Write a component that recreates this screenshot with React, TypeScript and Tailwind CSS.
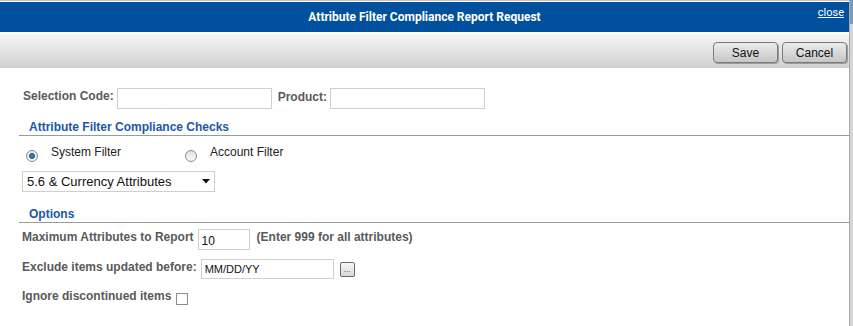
const Label = ({ children, className = '' }: { children: React.ReactNode; className?: string }) => (
  <span className={`text-[12px] leading-[14px] font-bold text-[#5a5a5a] ${className}`}>{children}</span>
);

const SectionHeader = ({ title, className = '' }: { title: string; className?: string }) => (
  <div className={`ml-[19px] border-b border-[#9a9a9a] pb-[1px] pl-[10px] text-[12px] leading-[14px] ${className}`}>
    <span className="font-bold text-[#1c58a6]">{title}</span>
  </div>
);

const Radio = ({ checked }: { checked?: boolean }) => (
  <span className="flex h-[12px] w-[12px] items-center justify-center rounded-full border border-[#8a8a8a] bg-gradient-to-b from-[#e2e2e2] to-[#fbfbfb]">
    {checked && <span className="h-[6px] w-[6px] rounded-full border border-[#1b4d7c] bg-[#2f7fc4]" />}
  </span>
);

const ToolButton = ({ label }: { label: string }) => (
  <button className="flex h-[21px] w-[65px] items-center justify-center rounded-[4px] border border-[#7a7a7a] bg-gradient-to-b from-[#ececec] to-[#c6c6c6] text-[12px] text-[#111] shadow-[1px_1px_0_#9c9c9c]">
    {label}
  </button>
);

export default function App() {
  return (
    <div className="flex h-[326px] w-[853px] overflow-hidden bg-white leading-[14px]" style={{ fontFamily: '"Liberation Sans", Arial, sans-serif' }}>
      <div className="flex w-[849px] flex-col">
        {/* Title bar */}
        <div className="h-[1px] bg-[#c4c4c4]" />
        <div className="h-[1px] bg-white" />
        <div className="relative flex h-[30px] items-center justify-center bg-[#00509e]">
          <span className="text-[12px] font-bold text-white" style={{ fontFamily: 'Roboto, "Liberation Sans", sans-serif' }}>
            Attribute Filter Compliance Report Request
          </span>
          <a className="absolute right-[5px] top-[4px] text-[11px] text-white underline" style={{ fontFamily: 'Roboto, "Liberation Sans", sans-serif' }}>
            close
          </a>
        </div>
        <div className="h-[2px] bg-white" />

        {/* Toolbar */}
        <div className="flex h-[34px] justify-end gap-[4px] bg-gradient-to-b from-[#f6f6f6] to-[#d0d0d0] pr-[2px] pt-[8px]">
          <ToolButton label="Save" />
          <ToolButton label="Cancel" />
        </div>

        {/* Selection row */}
        <div className="mt-[20px] flex items-start pl-[23px]">
          <Label className="mt-[1px]">Selection Code:</Label>
          <input className="ml-[3px] h-[21px] w-[155px] border border-[#cfcfcf] outline-none" />
          <Label className="ml-[6px] mt-[2px]">Product:</Label>
          <input className="ml-[3px] h-[21px] w-[155px] border border-[#cfcfcf] outline-none" />
        </div>

        <SectionHeader title="Attribute Filter Compliance Checks" className="mt-[11px]" />

        <div className="mt-[14px] flex items-start pl-[26px]">
          <Radio checked />
          <span className="ml-[13px] -mt-[5px] text-[12px] text-[#222]">System Filter</span>
          <span className="ml-[64px]">
            <Radio />
          </span>
          <span className="ml-[13px] -mt-[5px] text-[12px] text-[#222]">Account Filter</span>
        </div>

        <div className="ml-[22px] mt-[9px] flex h-[21px] w-[193px] items-center justify-between border border-[#cfcfcf] pl-[4px] pr-[4px]">
          <span className="text-[13px] text-[#111]">5.6 &amp; Currency Attributes</span>
          <svg width="8" height="5" viewBox="0 0 8 5">
            <path d="M0 0h8L4 4.5z" fill="#111" />
          </svg>
        </div>

        <SectionHeader title="Options" className="mt-[15px]" />

        <div className="mt-[6px] flex items-start pl-[22px]">
          <Label className="mt-[1px]">Maximum Attributes to Report</Label>
          <div className="ml-[4px] flex h-[21px] w-[52px] items-end border border-[#cfcfcf] pb-[1px] pl-[3px] text-[12px] text-[#111]">10</div>
          <Label className="ml-[7px] mt-[1px]">(Enter 999 for all attributes)</Label>
        </div>

        <div className="mt-[9px] flex items-start pl-[22px]">
          <Label className="mt-[1px]">Exclude items updated before:</Label>
          <div className="ml-[4px] flex h-[20px] w-[133px] items-center border border-[#cfcfcf] pl-[3px] text-[11px] text-[#111]">MM/DD/YY</div>
          <button className="ml-[6px] mt-[3px] flex h-[15px] w-[15px] items-end justify-center rounded-[2px] border border-[#6a6a6a] bg-gradient-to-b from-[#f8f8f8] to-[#d8d8d8] pb-[2px] text-[8px] leading-[8px] text-[#333]">
            ...
          </button>
        </div>

        <div className="mt-[10px] flex items-start pl-[22px]">
          <Label>Ignore discontinued items</Label>
          <span className="ml-[5px] mt-[4px] h-[12px] w-[12px] border border-[#8c8c8c] bg-white" />
        </div>
      </div>

      {/* Strip of the page behind */}
      <div className="flex w-[4px] flex-col border-l border-[#a8a8a8]">
        <div className="h-[24px] bg-[#7f98b6]" />
        <div className="flex-1 bg-[#d6d6d6]" />
      </div>
    </div>
  );
}
